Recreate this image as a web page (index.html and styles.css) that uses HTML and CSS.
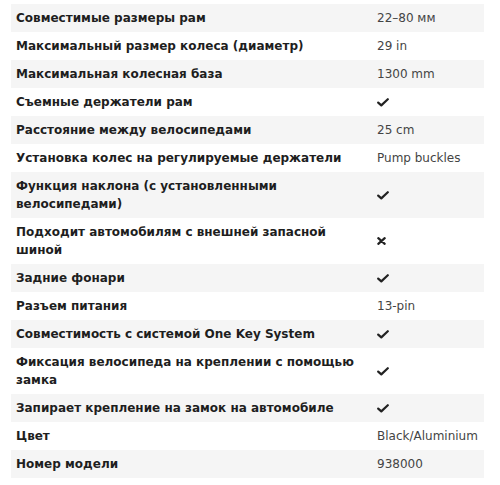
FILE: index.html
```html
<!DOCTYPE html>
<html lang="ru">
<head>
<meta charset="utf-8">
<link rel="stylesheet" href="styles.css">
</head>
<body>
<div class="wrap">
<table class="specs">
<tbody>
<tr><th>Совместимые размеры рам</th><td>22–80 мм</td></tr>
<tr><th>Максимальный размер колеса (диаметр)</th><td>29 in</td></tr>
<tr><th>Максимальная колесная база</th><td>1300 mm</td></tr>
<tr><th>Съемные держатели рам</th><td><svg class="ico" viewBox="0 0 12 9" width="12" height="9"><path d="M1.2 4.6 L4.3 7.4 L10.8 1.2" fill="none" stroke="#222" stroke-width="2.2" stroke-linecap="round" stroke-linejoin="round"/></svg></td></tr>
<tr><th>Расстояние между велосипедами</th><td>25 cm</td></tr>
<tr><th>Установка колес на регулируемые держатели</th><td>Pump buckles</td></tr>
<tr><th>Функция наклона (с установленными велосипедами)</th><td><svg class="ico" viewBox="0 0 12 9" width="12" height="9"><path d="M1.2 4.6 L4.3 7.4 L10.8 1.2" fill="none" stroke="#222" stroke-width="2.2" stroke-linecap="round" stroke-linejoin="round"/></svg></td></tr>
<tr><th>Подходит автомобилям с внешней запасной шиной</th><td><svg class="ico" viewBox="0 0 9 8" width="9" height="8"><path d="M1.3 1.2 L7.7 6.8 M7.7 1.2 L1.3 6.8" fill="none" stroke="#222" stroke-width="2.2" stroke-linecap="round"/></svg></td></tr>
<tr><th>Задние фонари</th><td><svg class="ico" viewBox="0 0 12 9" width="12" height="9"><path d="M1.2 4.6 L4.3 7.4 L10.8 1.2" fill="none" stroke="#222" stroke-width="2.2" stroke-linecap="round" stroke-linejoin="round"/></svg></td></tr>
<tr><th>Разъем питания</th><td>13-pin</td></tr>
<tr><th>Совместимость с системой One Key System</th><td><svg class="ico" viewBox="0 0 12 9" width="12" height="9"><path d="M1.2 4.6 L4.3 7.4 L10.8 1.2" fill="none" stroke="#222" stroke-width="2.2" stroke-linecap="round" stroke-linejoin="round"/></svg></td></tr>
<tr><th>Фиксация велосипеда на креплении с помощью замка</th><td><svg class="ico" viewBox="0 0 12 9" width="12" height="9"><path d="M1.2 4.6 L4.3 7.4 L10.8 1.2" fill="none" stroke="#222" stroke-width="2.2" stroke-linecap="round" stroke-linejoin="round"/></svg></td></tr>
<tr><th>Запирает крепление на замок на автомобиле</th><td><svg class="ico" viewBox="0 0 12 9" width="12" height="9"><path d="M1.2 4.6 L4.3 7.4 L10.8 1.2" fill="none" stroke="#222" stroke-width="2.2" stroke-linecap="round" stroke-linejoin="round"/></svg></td></tr>
<tr><th>Цвет</th><td>Black/Aluminium</td></tr>
<tr><th>Номер модели</th><td>938000</td></tr>
</tbody>
</table>
</div>
</body>
</html>
```
FILE: styles.css
```css
html, body {
  margin: 0;
  padding: 0;
  background: #fff;
}
.wrap {
  padding: 4px 16px 0 11px;
}
.specs {
  width: 473px;
  border-collapse: collapse;
  font-family: "DejaVu Sans", Verdana, sans-serif;
  font-size: 12px;
  line-height: 18px;
  color: #222;
}
.specs tr:nth-child(odd) {
  background: #f5f5f5;
}
.specs th, .specs td {
  padding: 5px 5px;
  vertical-align: middle;
  text-align: left;
}
.specs th {
  width: 351px;
  font-weight: bold;
  color: #1e1e1e;
}
.specs td {
  color: #444;
  font-weight: normal;
  white-space: nowrap;
}
.ico {
  display: block;
  margin-left: 0;
}
```
